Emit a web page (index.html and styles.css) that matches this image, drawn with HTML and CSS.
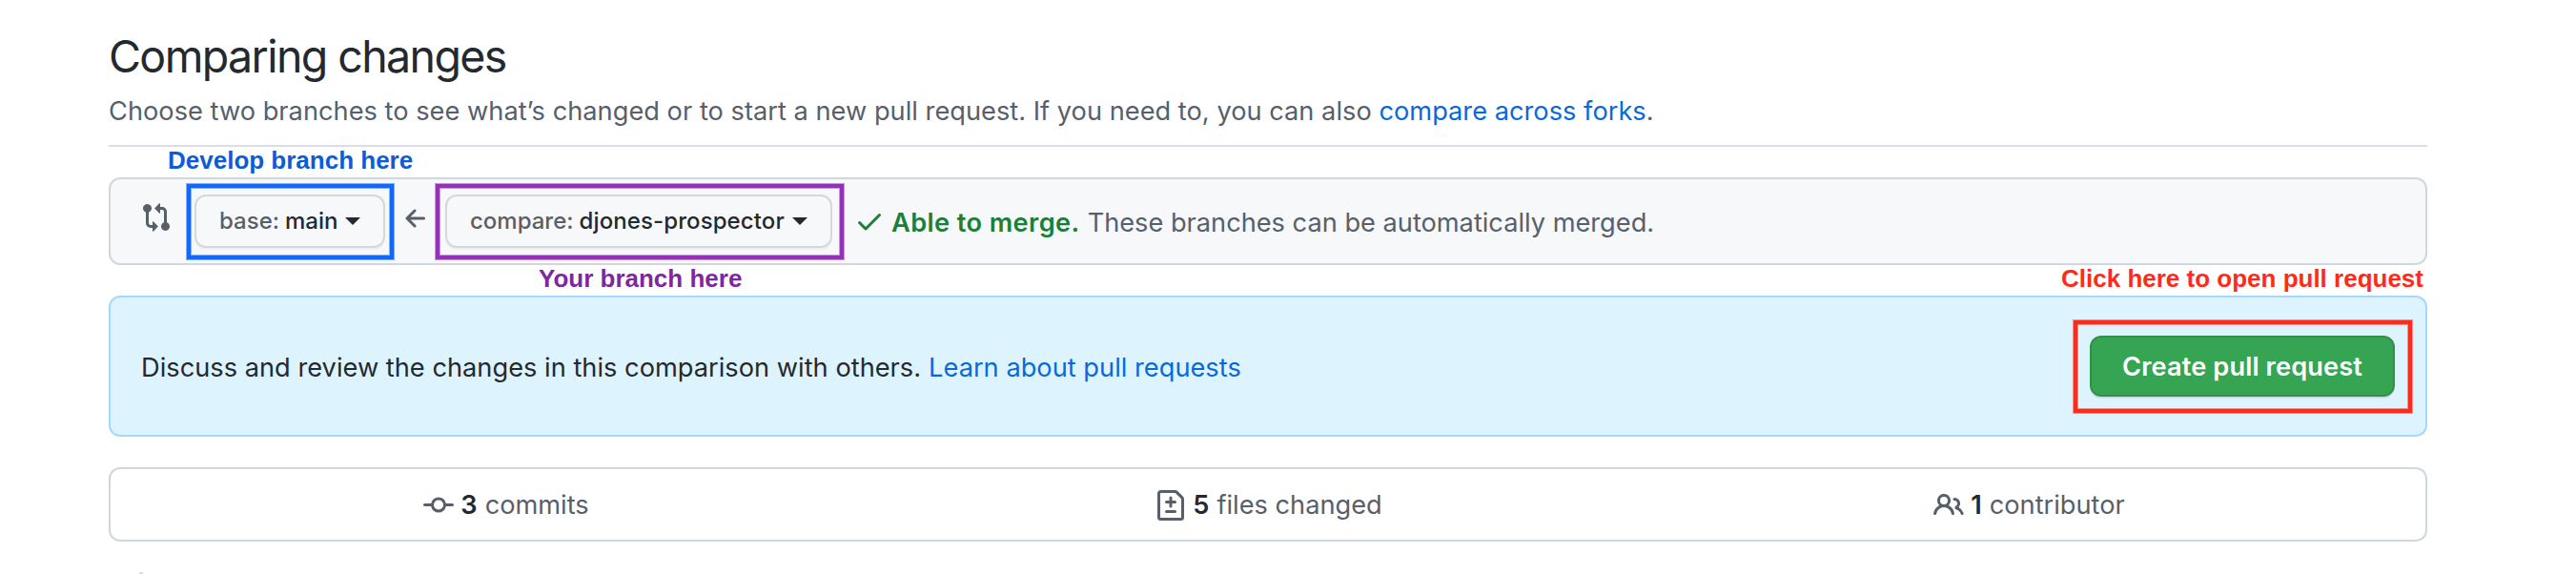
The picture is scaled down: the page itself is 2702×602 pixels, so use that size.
FILE: index.html
```html
<!DOCTYPE html>
<html lang="en">
<head>
<meta charset="utf-8">
<title>Comparing changes</title>
<link rel="stylesheet" href="styles.css">
</head>
<body>
<main class="page">
  <header class="page-head">
    <h1 class="title">Comparing changes</h1>
    <p class="subtitle"><span>Choose two branches to see what’s changed or to start a new pull request. If you need to, you can also </span><a class="link" href="#">compare across forks</a>.</p>
  </header>

  <div class="notes notes-top">
    <span class="note note-blue">Develop branch here</span>
  </div>

  <section class="range">
    <svg class="icon compare-icon" viewBox="0 0 16 16"><path d="M9.573.677L7.177 3.073a.25.25 0 000 .354l2.396 2.396A.25.25 0 0010 5.646V4h1a1 1 0 011 1v5.628a2.251 2.251 0 101.5 0V5A2.5 2.5 0 0011 2.5h-1V.854a.25.25 0 00-.427-.177zM6 12v-1.646a.25.25 0 01.427-.177l2.396 2.396a.25.25 0 010 .354l-2.396 2.396A.25.25 0 016 15.146V13.5H5A2.5 2.5 0 012.5 11V5.372a2.25 2.25 0 111.5 0V11a1 1 0 001 1h1zm6.75 0a.75.75 0 100 1.5.75.75 0 000-1.5zM4 3.25a.75.75 0 11-1.5 0 .75.75 0 011.5 0z"/></svg>
    <div class="framed frame-blue">
      <button class="btn btn-base"><span class="btn-label">base:</span><span class="btn-value">main</span><i class="caret"></i></button>
    </div>
    <svg class="arrow" viewBox="0 0 22 20"><path d="M10 2L2 10l8 8M2.500 10H19.500"/></svg>
    <div class="framed frame-purple">
      <button class="btn btn-compare"><span class="btn-label">compare:</span><span class="btn-value">djones-prospector</span><i class="caret"></i></button>
    </div>
    <svg class="icon check" viewBox="0 0 16 16"><path d="M13.780 4.220a.75.75 0 010 1.060l-7.250 7.250a.75.75 0 01-1.060 0L2.220 9.280a.75.75 0 011.060-1.060L6 10.940l6.720-6.720a.75.75 0 011.060 0z"/></svg>
    <p class="merge"><strong class="merge-ok">Able to merge.</strong><span class="merge-text">These branches can be automatically merged.</span></p>
  </section>

  <div class="notes notes-mid">
    <span class="note note-purple">Your branch here</span>
    <span class="note note-red">Click here to open pull request</span>
  </div>

  <section class="discuss">
    <p class="discuss-text"><span>Discuss and review the changes in this comparison with others.</span><a class="link discuss-link" href="#">Learn about pull requests</a></p>
    <div class="framed frame-red">
      <button class="btn-primary">Create pull request</button>
    </div>
  </section>

  <section class="stats">
    <div class="stat">
      <svg class="icon" viewBox="0 0 16 16"><path fill-rule="evenodd" d="M10.500 7.750a2.500 2.500 0 11-5 0 2.500 2.500 0 015 0zm1.430.750a4.002 4.002 0 01-7.860 0H.750a.75.75 0 110-1.500h3.320a4.001 4.001 0 017.860 0h3.320a.75.75 0 110 1.500h-3.320z"/></svg>
      <b class="count">3</b><span>commits</span>
    </div>
    <div class="stat">
      <svg class="icon" viewBox="0 0 16 16"><path fill-rule="evenodd" d="M2.750 1.500a.25.25 0 00-.250.250v12.500c0 .138.112.250.250.250h10.500a.25.25 0 00.250-.250V4.664a.25.25 0 00-.073-.177l-2.914-2.914a.25.25 0 00-.177-.073H2.750zM1 1.750C1 .784 1.784 0 2.750 0h7.586c.464 0 .909.184 1.237.513l2.914 2.914c.329.328.513.773.513 1.237v9.586A1.750 1.750 0 0113.250 16H2.750A1.750 1.750 0 011 14.250V1.750zm7 1.500a.75.75 0 01.750.750v1.500h1.500a.75.75 0 010 1.500h-1.500v1.500a.75.75 0 01-1.500 0V7h-1.500a.75.75 0 010-1.500h1.500V4A.75.75 0 018 3.250zm-3 8a.75.75 0 01.750-.750h4.500a.75.75 0 010 1.500h-4.500a.75.75 0 01-.750-.750z"/></svg>
      <b class="count">5</b><span>files changed</span>
    </div>
    <div class="stat">
      <svg class="icon" viewBox="0 0 16 16"><path fill-rule="evenodd" d="M5.500 3.500a2 2 0 100 4 2 2 0 000-4zM2 5.500a3.500 3.500 0 115.898 2.549 5.507 5.507 0 013.034 4.084.75.75 0 11-1.482.235 4.001 4.001 0 00-7.900 0 .75.75 0 01-1.482-.236A5.507 5.507 0 013.102 8.050 3.490 3.490 0 012 5.500zM11 4a.75.75 0 100 1.500 1.500 1.500 0 01.666 2.844.75.75 0 00-.416.672v.352a.75.75 0 00.574.730c1.200.289 2.162 1.200 2.522 2.372a.75.75 0 101.434-.440 5.010 5.010 0 00-2.560-3.012A3 3 0 0011 4z"/></svg>
      <b class="count">1</b><span>contributor</span>
    </div>
  </section>

  <div class="timeline"></div>
</main>
</body>
</html>
```
FILE: styles.css
```css
* { box-sizing: border-box; }
body {
  margin: 0;
  background: #fff;
  color: #24292f;
  font: 27.2px/42px Inter, "Liberation Sans", sans-serif;
}
h1, p { margin: 0; font-weight: 400; }
.page {
  width: 2432px;
  height: 602px;
  margin-left: 114px;
  padding-top: 29px;
  overflow: hidden;
  display: flex;
  flex-direction: column;
}
.page-head { border-bottom: 2px solid #d8dee4; height: 125px; flex: none; }
.title { font-size: 46.5px; line-height: 60px; letter-spacing: -1.6px; }
.subtitle { margin-top: 7px; color: #57606a; white-space: nowrap; letter-spacing: .025px; }
.link { color: #0969da; text-decoration: none; }

.notes {
  display: flex;
  height: 32px;
  flex: none;
  font: bold 26px/28px "Liberation Sans", Arial, sans-serif;
  white-space: nowrap;
}
.notes-top { padding-left: 62px; }
.notes-mid { justify-content: space-between; padding: 0 4px 0 451px; }
.note-blue { color: #0b5cd8; }
.note-purple { color: #7d27a0; }
.note-red { color: #fe2b1b; }

.range {
  display: flex;
  flex: none;
  align-items: flex-start;
  height: 92px;
  padding: 16px 0 0 32px;
  background: #f6f8fa;
  border: 2px solid #d0d7de;
  border-radius: 12px;
  white-space: nowrap;
}
.icon { width: 32px; height: 32px; flex: none; fill: #57606a; }
.compare-icon { margin: 8px 24px 0 0; }
.framed { position: relative; flex: none; }
.framed::after {
  content: "";
  position: absolute;
  border: 4px solid;
  pointer-events: none;
}
.frame-blue::after {
  inset: -11px -9px -12px -8px;
  border-color: #1068ff;
  box-shadow: 0 0 0 1px rgba(16, 104, 255, .5), inset 0 0 0 1px rgba(16, 104, 255, .5);
}
.frame-purple::after {
  inset: -11px -12px -12px -10px;
  border-color: #9530b9;
  box-shadow: 0 0 0 1px rgba(149, 48, 185, .5), inset 0 0 0 1px rgba(149, 48, 185, .5);
}
.frame-red::after {
  inset: -16px -18px -17px -17px;
  border-color: #fe2b1b;
  box-shadow: 0 0 0 1px rgba(254, 43, 27, .5), inset 0 0 0 1px rgba(254, 43, 27, .5);
}
.btn {
  display: flex;
  align-items: center;
  height: 56px;
  padding: 0 0 0 24px;
  font: 500 24px/40px Inter, sans-serif;
  color: #24292f;
  background: #f6f8fa;
  border: 2px solid #d5d8da;
  border-radius: 12px;
  box-shadow: 0 2px 0 rgba(27, 31, 36, .04);
}
.btn-base { width: 200px; }
.btn-compare { width: 406px; }
.btn-label { color: #5a5f65; margin-right: 6px; }
.btn-compare .btn-value { letter-spacing: .1px; }
.caret {
  margin: 0 0 0 8px;
  border: 8px solid transparent;
  border-top-color: #24292f;
  border-bottom: 0;
}
.arrow {
  width: 22px;
  height: 20px;
  margin: 15px 20px 0 21px;
  fill: none;
  stroke: #57606a;
  stroke-width: 3;
  stroke-linecap: round;
  stroke-linejoin: round;
}
.check { margin: 12px 7px 0 23px; fill: #1a7f37; }
.merge { display: flex; padding-top: 9px; color: #57606a; }
.merge-ok { color: #1a7f37; font-weight: 600; letter-spacing: .4px; margin-right: 8px; }

.discuss {
  display: flex;
  flex: none;
  justify-content: space-between;
  align-items: flex-start;
  height: 148px;
  padding: 40px 32px 0 32px;
  background: #ddf4ff;
  border: 2px solid #a6d8ff;
  border-radius: 12px;
  white-space: nowrap;
}
.discuss-text { display: flex; padding-top: 13px; letter-spacing: .025px; }
.discuss-link { margin-left: 8px; }
.btn-primary {
  display: block;
  width: 320px;
  height: 64px;
  padding: 1px 0 0;
  font: 600 27.2px/40px Inter, sans-serif;
  letter-spacing: .12px;
  color: #fff;
  background: #36a553;
  border: 2px solid #319149;
  border-radius: 12px;
  box-shadow: 0 2px 0 rgba(27, 31, 36, .1);
}

.stats {
  display: grid;
  grid-template-columns: 830fr 770fr 828fr;
  flex: none;
  height: 78px;
  margin-top: 32px;
  padding-top: 2px;
  border: 2px solid #d0d7de;
  border-radius: 12px;
  color: #57606a;
}
.stat { display: flex; justify-content: center; align-items: center; }
.stat:last-child { padding-right: 3px; }
.count { margin: 0 8px 0 7px; font-weight: 600; color: #24292f; }

.timeline { flex: none; width: 4px; height: 2px; margin: 32px 0 0 32px; background: #d8dee4; }
```
